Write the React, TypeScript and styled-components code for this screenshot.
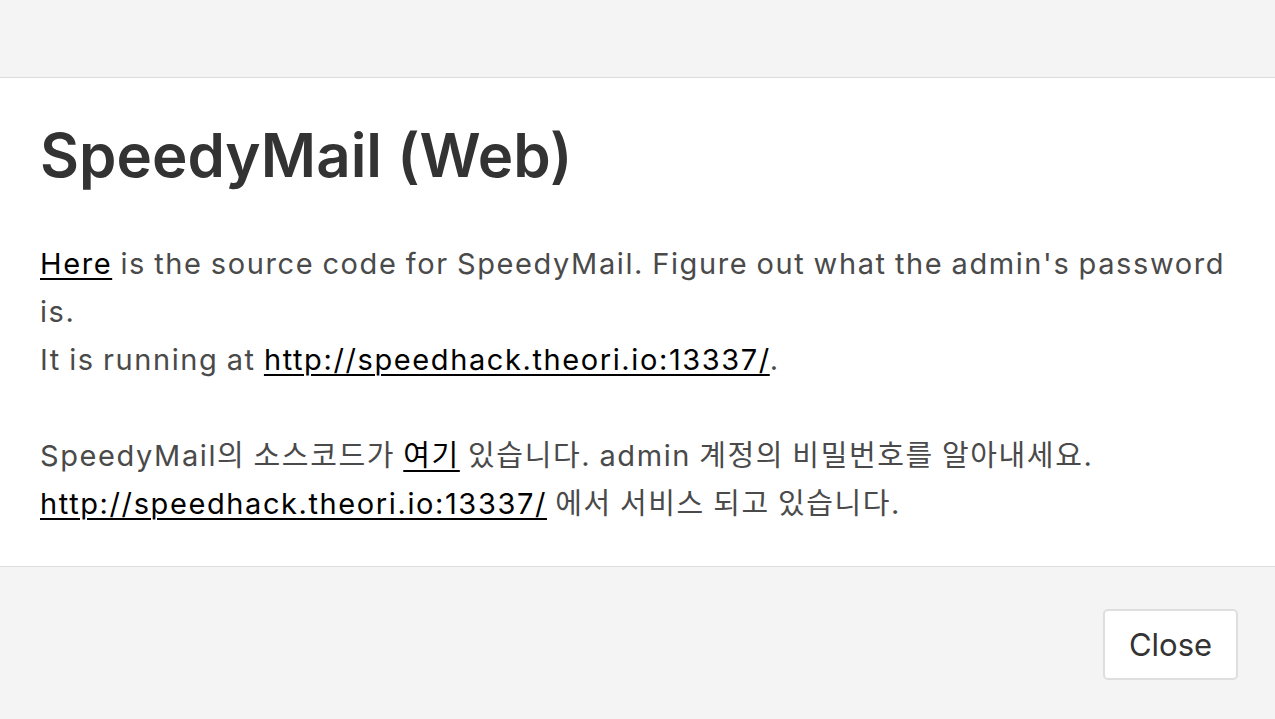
import React from "react";
import styled, { createGlobalStyle } from "styled-components";

const Global = createGlobalStyle`
  html, body { margin: 0; padding: 0; background: #f4f4f4; }
  body { font-family: Inter, "Noto Sans CJK KR", sans-serif; -webkit-font-smoothing: antialiased; }
`;

const Modal = styled.div`
  display: flex;
  flex-direction: column;
  width: 1275px;
  height: 719px;
  background: #f4f4f4;
`;

const Header = styled.div`
  height: 77px;
  border-bottom: 1px solid #dcdcdc;
  background: #f4f4f4;
`;

const Body = styled.div`
  background: #fff;
  padding: 0 20px 0 40px;
  height: 489px;
  box-sizing: border-box;
  border-bottom: 1px solid #dcdcdc;
  overflow: hidden;
`;

const Title = styled.h1`
  margin: 47px 0 0;
  font-size: 60px;
  line-height: 60px;
  font-weight: 600;
  color: #333;
`;

const Text = styled.p`
  margin: 55px 0 0;
  font-size: 29px;
  line-height: 48px;
  letter-spacing: 1.6px;
  word-spacing: -1.5px;
  color: #4a4a4a;
`;

const Link = styled.a`
  color: #000;
  text-decoration: underline;
  text-underline-offset: 4px;
  text-decoration-thickness: 2px;
`;

const Footer = styled.div`
  flex: 1;
  display: flex;
  justify-content: flex-end;
  align-items: center;
  padding: 0 37px 0 0;
  background: #f4f4f4;
`;

const Button = styled.button`
  width: 135px;
  height: 71px;
  margin-top: 3px;
  background: #fff;
  border: 2px solid #dedede;
  border-radius: 5px;
  font-family: Inter, sans-serif;
  font-size: 31px;
  color: #333;
  cursor: pointer;
`;

export default function App() {
  return (
    <>
      <Global />
      <Modal>
        <Header />
        <Body>
          <Title>SpeedyMail (Web)</Title>
          <Text>
            <Link href="#">Here</Link> is the source code for SpeedyMail. Figure out what the admin's password is.
            <br />
            It is running at <Link href="#">http://speedhack.theori.io:13337/</Link>.
            <br />
            <br />
            SpeedyMail의 소스코드가 <Link href="#">여기</Link> 있습니다. admin 계정의 비밀번호를 알아내세요.
            <br />
            <Link href="#">http://speedhack.theori.io:13337/</Link> 에서 서비스 되고 있습니다.
          </Text>
        </Body>
        <Footer>
          <Button>Close</Button>
        </Footer>
      </Modal>
    </>
  );
}
